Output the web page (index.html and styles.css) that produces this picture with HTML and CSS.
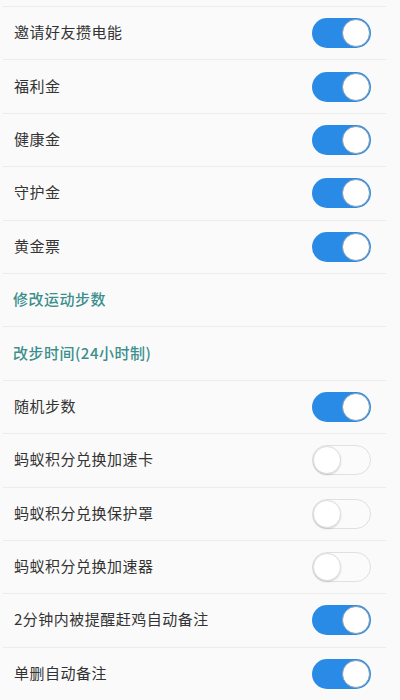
FILE: index.html
```html
<!DOCTYPE html>
<html>
<head>
<meta charset="utf-8">
<link rel="stylesheet" href="styles.css">
</head>
<body>
<div class="list">
  <div class="row"><span class="label">邀请好友攒电能</span><span class="sw on"><span class="knob"></span></span></div>
  <div class="row"><span class="label">福利金</span><span class="sw on"><span class="knob"></span></span></div>
  <div class="row"><span class="label">健康金</span><span class="sw on"><span class="knob"></span></span></div>
  <div class="row"><span class="label">守护金</span><span class="sw on"><span class="knob"></span></span></div>
  <div class="row"><span class="label">黄金票</span><span class="sw on"><span class="knob"></span></span></div>
  <div class="row"><span class="label link">修改运动步数</span></div>
  <div class="row"><span class="label link">改步时间(24小时制)</span></div>
  <div class="row"><span class="label">随机步数</span><span class="sw on"><span class="knob"></span></span></div>
  <div class="row"><span class="label">蚂蚁积分兑换加速卡</span><span class="sw off"><span class="knob"></span></span></div>
  <div class="row"><span class="label">蚂蚁积分兑换保护罩</span><span class="sw off"><span class="knob"></span></span></div>
  <div class="row"><span class="label">蚂蚁积分兑换加速器</span><span class="sw off"><span class="knob"></span></span></div>
  <div class="row"><span class="label">2分钟内被提醒赶鸡自动备注</span><span class="sw on"><span class="knob"></span></span></div>
  <div class="row"><span class="label">单删自动备注</span><span class="sw on"><span class="knob"></span></span></div>
</div>
</body>
</html>
```
FILE: styles.css
```css
html, body {
  margin: 0;
  padding: 0;
  background: #fafafa;
  height: 700px;
  overflow: hidden;
}
body {
  font-family: "Noto Sans CJK SC", "Noto Sans", sans-serif;
  color: #333;
}
.list {
  padding-top: 6px;
  margin-left: 3px;
  width: 383px;
}
.row {
  height: 52.4px;
  border-top: 1px solid #ececec;
  display: flex;
  align-items: center;
  justify-content: space-between;
  padding-left: 11px;
  padding-right: 15px;
}
.label {
  font-size: 15px;
  letter-spacing: 0.5px;
  line-height: 20px;
  margin-top: -2px;
}
.label.link {
  color: #3b8f8c;
  font-weight: 500;
  margin-left: -1px;
}
.sw {
  width: 59px;
  height: 30px;
  box-sizing: border-box;
  border-radius: 15px;
  display: flex;
  align-items: center;
  padding: 1px;
}
.sw.on {
  background: #2a8be6;
  justify-content: flex-end;
}
.sw.off {
  background: #fbfbfb;
  border: 1px solid #e0e0e0;
  justify-content: flex-start;
  padding: 0;
}
.knob {
  width: 28px;
  height: 28px;
  box-sizing: border-box;
  border-radius: 50%;
  background: #fff;
}
.sw.on .knob {
  border: 1px solid #8aa0b0;
}
.sw.off .knob {
  border: 1px solid #dedede;
  box-shadow: 0 1px 2px rgba(0,0,0,0.15);
}
```
